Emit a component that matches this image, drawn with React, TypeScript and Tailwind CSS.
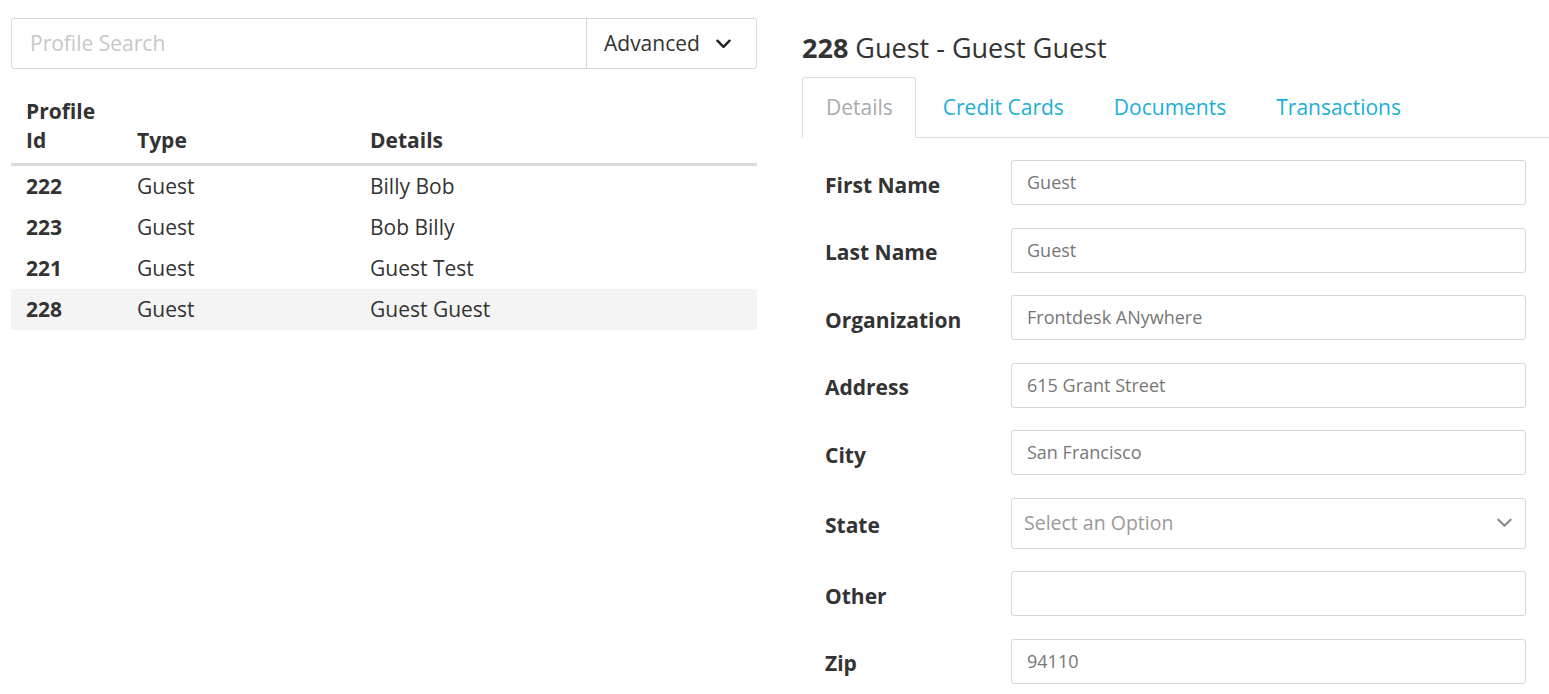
const profiles = [
  { id: 222, type: "Guest", details: "Billy Bob" },
  { id: 223, type: "Guest", details: "Bob Billy" },
  { id: 221, type: "Guest", details: "Guest Test" },
  { id: 228, type: "Guest", details: "Guest Guest" },
];

const fields = [
  { label: "First Name", value: "Guest" },
  { label: "Last Name", value: "Guest" },
  { label: "Organization", value: "Frontdesk ANywhere" },
  { label: "Address", value: "615 Grant Street" },
  { label: "City", value: "San Francisco" },
];

function Chevron({ className, strokeWidth }: { className: string; strokeWidth: number }) {
  return (
    <svg viewBox="0 0 16 10" fill="none" stroke="currentColor" strokeWidth={strokeWidth} className={className}>
      <polyline points="1.5,1.5 8,8 14.5,1.5" strokeLinecap="round" strokeLinejoin="round" />
    </svg>
  );
}

function ProfileSearch() {
  return (
    <div className="flex h-[51px] rounded-[3px] border border-[#d6d6d6]">
      <div className="flex flex-1 items-center pl-[18px] text-[21px] text-[#c8c8c8]">
        Profile Search
      </div>
      <div className="flex w-[170px] items-center border-l border-[#d6d6d6] pl-[17px] text-[21px] text-[#333]">
        Advanced
        <Chevron className="ml-[16px] h-[10px] w-[15px] text-[#222]" strokeWidth={2.6} />
      </div>
    </div>
  );
}

function ProfileTable() {
  return (
    <table className="mt-[28px] w-full border-collapse text-left text-[21px] leading-[29px] text-[#333]">
      <thead>
        <tr className="border-b-[3px] border-[#dadada]">
          <th className="w-[111px] px-[15px] pb-[8px] align-bottom font-bold">
            Profile
            <br />
            Id
          </th>
          <th className="w-[233px] px-[15px] pb-[8px] align-bottom font-bold">Type</th>
          <th className="px-[15px] pb-[8px] align-bottom font-bold">Details</th>
        </tr>
      </thead>
      <tbody>
        {profiles.map((p) => (
          <tr key={p.id} className={p.id === 228 ? "bg-[#f4f4f4]" : ""}>
            <td className="px-[15px] py-[6px] font-bold">{p.id}</td>
            <td className="px-[15px] py-[6px]">{p.type}</td>
            <td className="px-[15px] py-[6px]">{p.details}</td>
          </tr>
        ))}
      </tbody>
    </table>
  );
}

function FieldRow({ label, children }: { label: string; children: React.ReactNode }) {
  return (
    <div className="flex items-center">
      <div className="w-[186px] pt-[6px] text-[21px] font-bold text-[#333]">{label}</div>
      <div className="flex-1">{children}</div>
    </div>
  );
}

function TextBox({ value }: { value: string }) {
  return (
    <div className="flex h-[45px] items-center rounded-[3px] border border-[#d6d6d6] px-[15px] text-[18px] text-[#777]">
      {value}
    </div>
  );
}

function DetailsPanel() {
  return (
    <div>
      <h1 className="mt-[30px] text-[27px] leading-[36px] text-[#333]">
        <span className="font-bold">228</span> Guest - Guest Guest
      </h1>
      <div className="mt-[11px] flex border-b border-[#dcdcdc] text-[21px] leading-[28px]">
        <div className="-mb-px rounded-t-[3px] border border-b-white border-[#dcdcdc] bg-white pl-[23px] pr-[22px] py-[15px] text-[#aaa]">
          Details
        </div>
        <div className="pl-[27px] pr-[25px] py-[16px] text-[#1bafd6]">Credit Cards</div>
        <div className="px-[25px] py-[16px] text-[#1bafd6]">Documents</div>
        <div className="px-[25px] py-[16px] text-[#1bafd6]">Transactions</div>
      </div>
      <div className="flex flex-col gap-[22.5px] pt-[22px] pl-[23px] pr-[23px]">
        {fields.map((f) => (
          <FieldRow key={f.label} label={f.label}>
            <TextBox value={f.value} />
          </FieldRow>
        ))}
        <FieldRow label="State">
          <div className="flex h-[51px] items-center justify-between rounded-[3px] border border-[#d6d6d6] pl-[12px] pr-[13px] text-[19.5px] text-[#999]">
            Select an Option
            <Chevron className="h-[10px] w-[15px] text-[#888]" strokeWidth={2.2} />
          </div>
        </FieldRow>
        <FieldRow label="Other">
          <TextBox value="" />
        </FieldRow>
        <FieldRow label="Zip">
          <TextBox value="94110" />
        </FieldRow>
      </div>
    </div>
  );
}

export default function App() {
  return (
    <div className="flex bg-white font-['Open_Sans',sans-serif]">
      <div className="ml-[11px] mt-[18px] w-[746px] shrink-0">
        <ProfileSearch />
        <ProfileTable />
      </div>
      <div className="ml-[45px] flex-1">
        <DetailsPanel />
      </div>
    </div>
  );
}
